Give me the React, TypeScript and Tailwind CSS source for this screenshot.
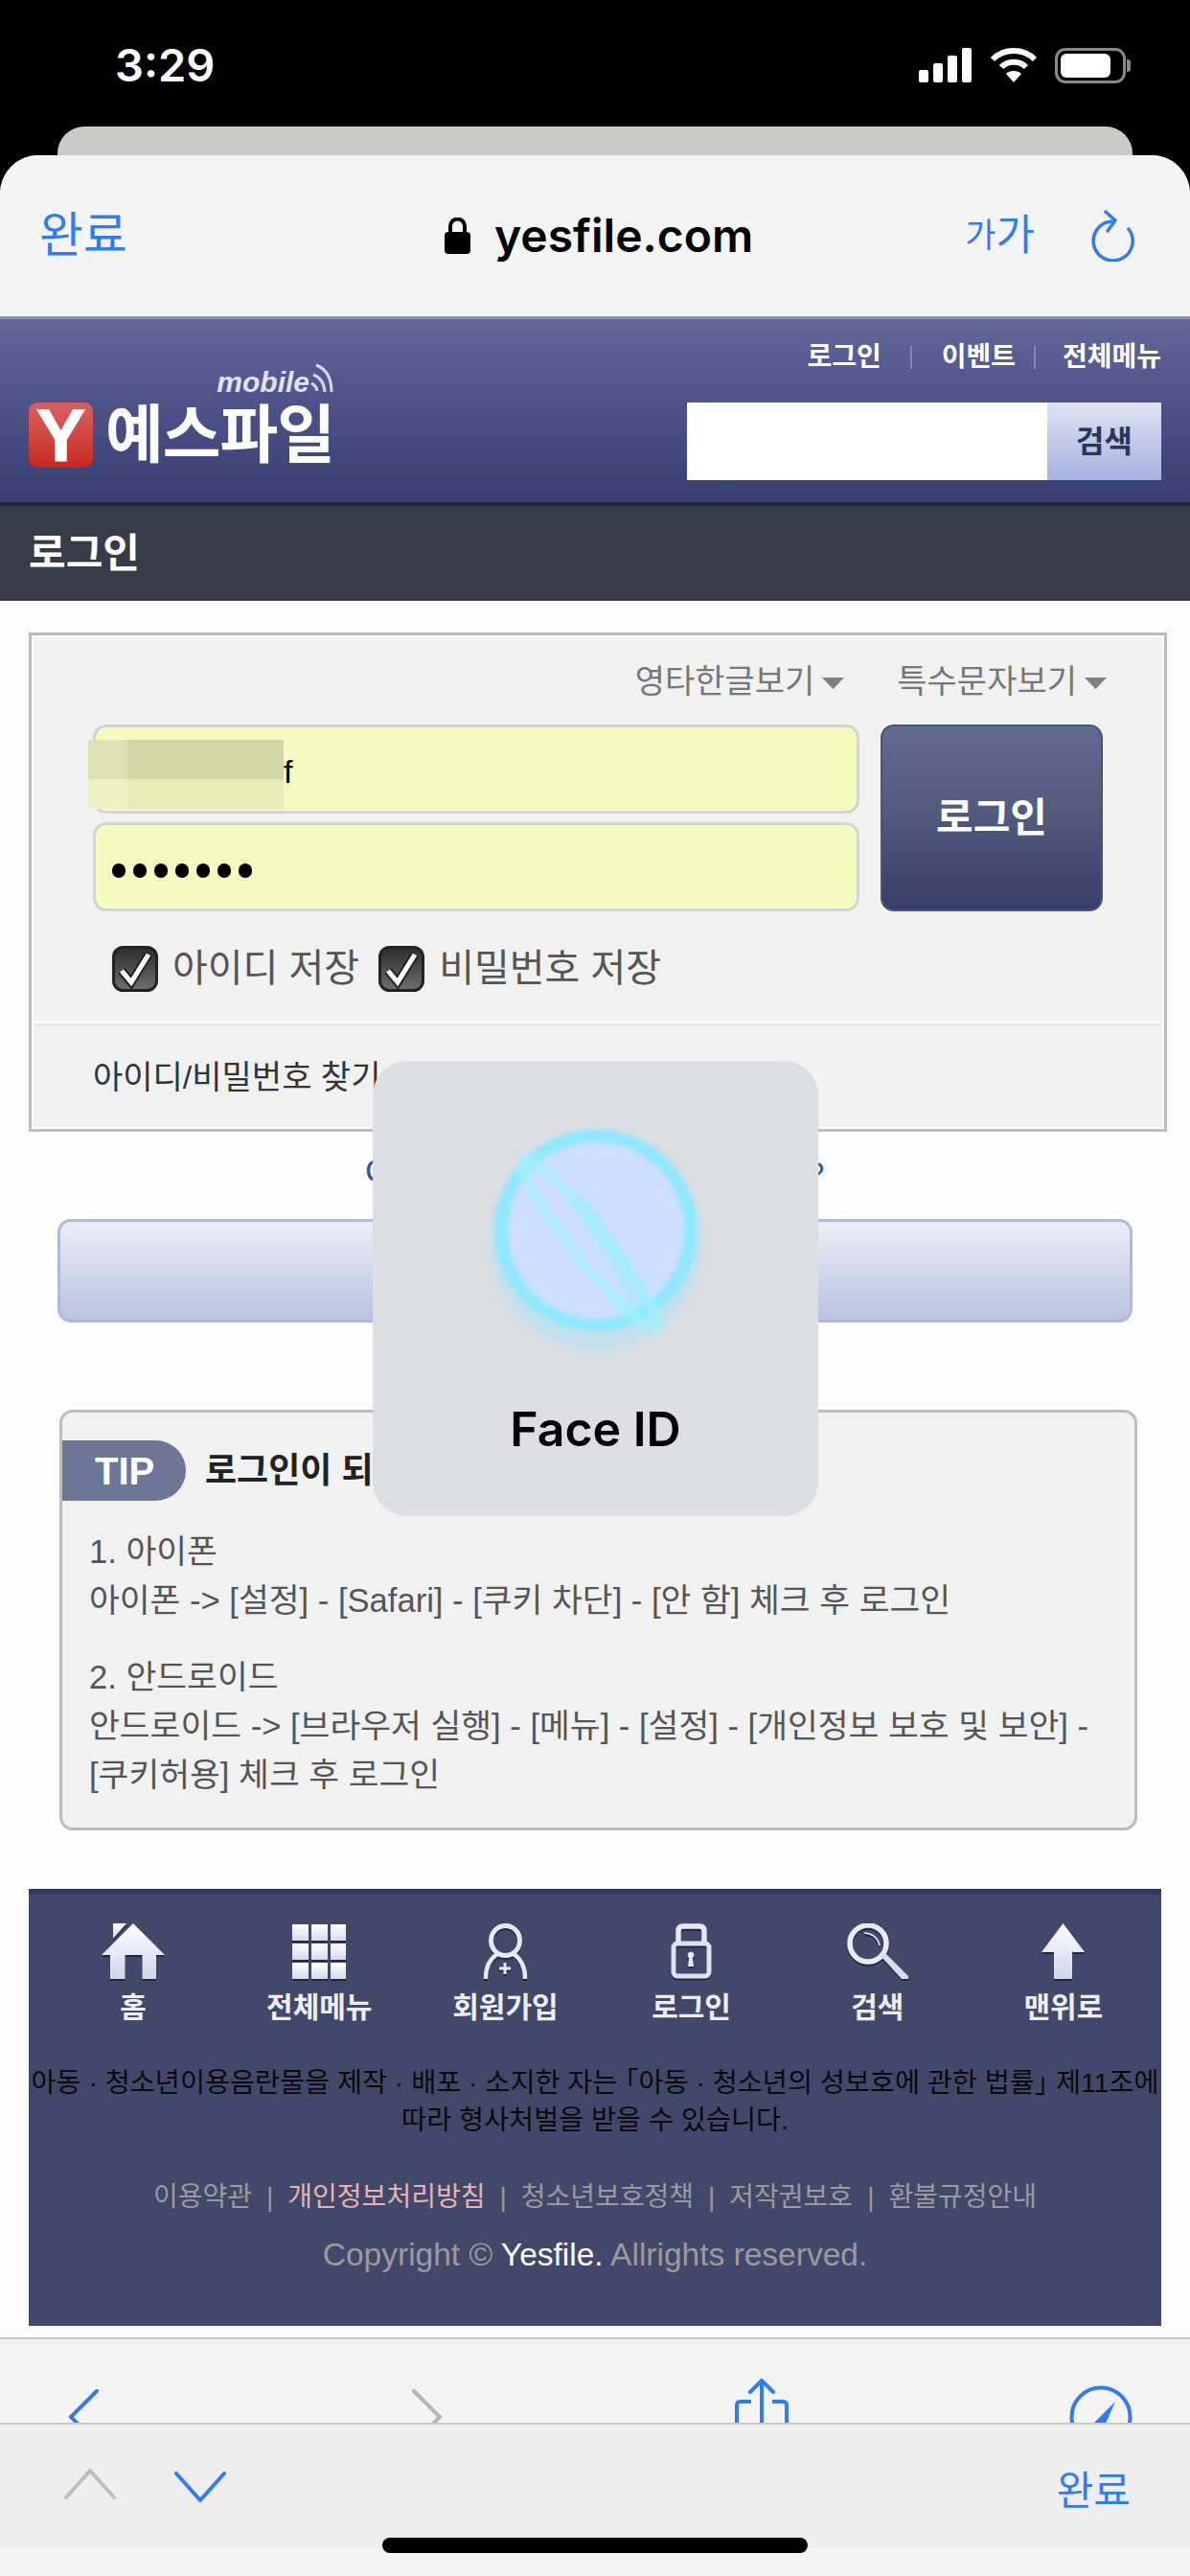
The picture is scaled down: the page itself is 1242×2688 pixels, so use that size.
const navItems = [
    { label: '홈', icon: <HomeIcon /> },
    { label: '전체메뉴', icon: <GridIcon /> },
    { label: '회원가입', icon: <UserIcon /> },
    { label: '로그인', icon: <LockIcon /> },
    { label: '검색', icon: <SearchIcon /> },
    { label: '맨위로', icon: <UpIcon /> },
];

function HomeIcon() {
    return (
        <svg width="66" height="58" viewBox="0 0 66 58" fill="url(#footGrad)">
            <path d="M33 0 L66 33 H57 V58 H42.5 V33 H24.5 V58 H9 V33 H0 Z" />
            <path d="M12 0 H26 L12 16 Z" />
        </svg>
    );
}

function GridIcon() {
    const cells = [0, 1, 2, 3, 4, 5, 6, 7, 8];
    return (
        <div className="grid grid-cols-3 gap-[3px] w-[56px] h-[57px]">
            {cells.map((c) => (
                <div key={c} className="bg-gradient-to-b from-white to-[#d5daec]" />
            ))}
        </div>
    );
}

function UserIcon() {
    return (
        <svg width="47" height="58" viewBox="0 0 47 58" fill="none" stroke="#e6e9f3">
            <ellipse cx="23.5" cy="18" rx="15" ry="15.5" strokeWidth="5" />
            <path d="M3 57 C3 44 9 36 15 32 M44 57 C44 44 38 36 32 32" strokeWidth="4.5" strokeLinecap="round" />
            <path d="M23 41 V53 M17 47 H29" strokeWidth="3" />
        </svg>
    );
}

function LockIcon() {
    return (
        <svg width="43" height="58" viewBox="0 0 43 58" fill="none" stroke="#e6e9f3">
            <path d="M8 22 V8 Q8 3 13 3 H30 Q35 3 35 8 V22" strokeWidth="5.5" />
            <rect x="3" y="21" width="37" height="34" rx="4" strokeWidth="5" stroke="#dfe3f0" />
            <circle cx="21" cy="33" r="3.2" fill="#e6e9f3" stroke="none" />
            <path d="M19.5 34 H22.5 L24 45 H18 Z" fill="#e6e9f3" stroke="none" />
        </svg>
    );
}

function SearchIcon() {
    return (
        <svg width="65" height="58" viewBox="0 0 65 58" fill="none">
            <circle cx="23" cy="21" r="19" stroke="#e8ebf4" strokeWidth="5.5" />
            <path d="M36 34 L41 31 L65 55 V58 H58 Z" fill="#d7dcec" />
            <path d="M19 10 C26 10 33 14 35 23" stroke="#e8ebf4" strokeWidth="1.6" />
        </svg>
    );
}

function UpIcon() {
    return (
        <svg width="45" height="58" viewBox="0 0 45 58" fill="url(#footGrad)">
            <path d="M22.5 0 L45 30 H32 V58 H13 V30 H0 Z" />
        </svg>
    );
}

function CheckBox() {
    return (
        <svg width="48" height="48" viewBox="0 0 48 48" className="shrink-0">
            <defs>
                <linearGradient id="checkGrad" x1="0" y1="0" x2="0" y2="1">
                    <stop offset="0" stopColor="#2c2c2c" />
                    <stop offset="1" stopColor="#6f6f6f" />
                </linearGradient>
            </defs>
            <rect x="1.5" y="1.5" width="45" height="45" rx="10" fill="url(#checkGrad)" stroke="#222" strokeWidth="3" />
            <path d="M10 26 L20 38 L38 9" fill="none" stroke="#222" strokeWidth="9" />
            <path d="M10 26 L20 38 L38 9" fill="none" stroke="#fff" strokeWidth="5" />
        </svg>
    );
}

function DownTriangle() {
    return (
        <svg width="23" height="12" viewBox="0 0 23 12" fill="#808080" className="ml-[8px] mt-[15px]">
            <path d="M0 0 H23 L11.5 12 Z" />
        </svg>
    );
}

function FaceIdGlyph() {
    return (
        <svg width="280" height="240" viewBox="0 0 280 240" className="overflow-visible">
            <defs>
                <filter id="glowWide" x="-30%" y="-30%" width="160%" height="160%">
                    <feGaussianBlur stdDeviation="8" />
                </filter>
                <filter id="glowSoft" x="-30%" y="-30%" width="160%" height="160%">
                    <feGaussianBlur stdDeviation="2.5" />
                </filter>
                <radialGradient id="faceFill">
                    <stop offset="0" stopColor="#d2dcff" />
                    <stop offset="1" stopColor="#cddfff" />
                </radialGradient>
            </defs>
            <circle cx="140" cy="150" r="100" fill="none" stroke="#9fe4ff" strokeWidth="14" filter="url(#glowWide)" opacity="0.65" />
            <circle cx="140" cy="134" r="96" fill="url(#faceFill)" />
            <circle cx="140" cy="134" r="99" fill="none" stroke="#8ce8ff" strokeWidth="13" filter="url(#glowSoft)" />
            <ellipse cx="133" cy="148" rx="110" ry="17" transform="rotate(52 133 148)" fill="none" stroke="#a8eeff" strokeWidth="11" filter="url(#glowSoft)" opacity="0.85" />
            <path d="M122 98 L196 226" stroke="#80f2ff" strokeWidth="7" filter="url(#glowWide)" />
        </svg>
    );
}

export default function App() {
    return (
        <div className="relative w-[1242px] h-[2688px] overflow-hidden bg-black flex flex-col [font-family:'Liberation_Sans','Noto_Sans_CJK_KR',sans-serif]">
            <svg width="0" height="0" className="absolute">
                <defs>
                    <linearGradient id="footGrad" x1="0" y1="0" x2="0" y2="1">
                        <stop offset="0" stopColor="#ffffff" />
                        <stop offset="1" stopColor="#cfd5ea" />
                    </linearGradient>
                </defs>
            </svg>

            {/* Status bar */}
            <div className="h-[132px] shrink-0 flex items-start pt-[42px] pl-[120px] pr-[62px] text-white">
                <span className="text-[47px] leading-[52px] font-semibold [font-family:Inter,sans-serif]">3:29</span>
                <div className="ml-auto flex items-center gap-[18px] h-[52px]">
                    <svg width="56" height="36" viewBox="0 0 56 36" fill="#fff">
                        <rect x="0" y="23" width="10" height="13" rx="2" />
                        <rect x="15" y="16" width="10" height="20" rx="2" />
                        <rect x="30" y="8" width="10" height="28" rx="2" />
                        <rect x="45" y="0" width="10" height="36" rx="2" />
                    </svg>
                    <svg width="50" height="36" viewBox="0 0 50 36" fill="none" stroke="#fff" strokeWidth="6">
                        <path d="M3 12 C15 0 35 0 47 12" />
                        <path d="M12 20 C19 13 31 13 38 20" />
                        <path d="M25 36 L17 27 C21 23 29 23 33 27 Z" fill="#fff" stroke="none" />
                    </svg>
                    <div className="flex items-center">
                        <div className="w-[74px] h-[37px] rounded-[11px] border-[3px] border-[#8a8a8a] p-[3px]">
                            <div className="w-[52px] h-full bg-white rounded-[6px]" />
                        </div>
                        <div className="w-[4px] h-[13px] bg-[#8a8a8a] rounded-r-[3px] ml-[1px]" />
                    </div>
                </div>
            </div>

            {/* Sheet behind */}
            <div className="h-[30px] shrink-0 mx-[60px] bg-[#c9cbc7] rounded-t-[28px]" />

            {/* Sheet */}
            <div className="flex-1 min-h-0 bg-[#fdfdfd] rounded-t-[40px] overflow-hidden flex flex-col">
                {/* Browser top bar */}
                <div className="h-[168px] shrink-0 bg-[#f4f4f4] flex items-center pl-[41px] pr-[58px]">
                    <span className="w-[423px] text-[50px] leading-[56px] text-[#2f7cf6]">완료</span>
                    <svg width="27" height="38" viewBox="0 0 27 38" className="shrink-0">
                        <path d="M6 16 V9 a7.5 7.5 0 0 1 15 0 V16" fill="none" stroke="#000" strokeWidth="4" />
                        <rect x="0" y="15" width="27" height="23" rx="4" fill="#000" />
                    </svg>
                    <span className="ml-[25px] text-[48px] leading-[60px] font-semibold text-black [font-family:Inter,sans-serif]">yesfile.com</span>
                    <div className="ml-auto flex items-end text-[#2f7cf6] leading-[50px] mr-[58px]">
                        <span className="text-[35px]">가</span>
                        <span className="text-[44px]">가</span>
                    </div>
                    <svg width="46" height="54" viewBox="0 0 46 54" fill="none" stroke="#2f7cf6" strokeWidth="3.5" strokeLinecap="round" strokeLinejoin="round">
                        <path d="M22 12 A20.5 20.5 0 1 0 40 20" />
                        <path d="M16 2 L26 11 L18 22" />
                    </svg>
                </div>

                {/* Site header */}
                <div className="h-[194px] shrink-0 border-t-[3px] border-[#8a90a6] bg-gradient-to-b from-[#61669b] to-[#373e72] flex justify-between px-[30px]">
                    <div className="pt-[38px]">
                        <div className="flex items-end justify-end h-[46px] w-[318px]">
                            <span className="text-[30px] leading-[36px] italic font-bold text-[#dfe2f2] [font-family:'Liberation_Sans',sans-serif]">mobile</span>
                            <svg width="24" height="32" viewBox="0 0 24 32" fill="none" stroke="#d5d8ea" strokeWidth="3" className="mb-[6px] ml-[1px]">
                                <path d="M1 21 Q6 23 7 29" />
                                <path d="M3 12 Q14 16 15 30" />
                                <path d="M6 2 Q22 8 22 30" />
                            </svg>
                        </div>
                        <div className="flex items-center mt-[3px]">
                            <div className="w-[67px] h-[68px] rounded-[9px] bg-gradient-to-b from-[#d9605f] to-[#c9261f] flex items-center justify-center">
                                <span className="text-[78px] leading-[68px] font-bold text-white [-webkit-text-stroke:1px_white]">Y</span>
                            </div>
                            <span className="ml-[13px] text-[66px] leading-[68px] font-bold text-white tracking-[-1px]">예스파일</span>
                        </div>
                    </div>
                    <div className="pt-[23px] flex flex-col items-end">
                        <div className="flex items-center text-[28px] leading-[34px] font-bold text-white">
                            <span>로그인</span>
                            <span className="w-[2px] h-[24px] bg-[#8288ad] ml-[30px] mr-[31px]" />
                            <span>이벤트</span>
                            <span className="w-[2px] h-[24px] bg-[#8288ad] ml-[19px] mr-[28px]" />
                            <span>전체메뉴</span>
                        </div>
                        <div className="flex mt-[30px] h-[81px]">
                            <div className="w-[376px] bg-white" />
                            <div className="w-[119px] bg-gradient-to-b from-[#dfe3f4] to-[#a6b2e0] flex items-center justify-center">
                                <span className="text-[32px] font-bold text-[#2c3560]">검색</span>
                            </div>
                        </div>
                    </div>
                </div>

                {/* Page title */}
                <div className="h-[103px] shrink-0 border-t-[4px] border-[#1f2440] bg-[#363b47] flex items-center px-[30px]">
                    <span className="text-[42px] leading-[48px] font-semibold text-white">로그인</span>
                </div>

                {/* Page */}
                <div className="flex-1 min-h-0">
                    {/* Login panel */}
                    <div className="mt-[33px] mx-[30px] w-[1188px] h-[521px] border-[3px] border-[#bcbcbc] bg-[#f1f1f1] shadow-[inset_0_0_0_2px_#fff]">
                        <div className="h-[93px] pt-[29px] pr-[60px] flex justify-end items-start text-[34px] leading-[38px] text-[#777]">
                            <span>영타한글보기</span>
                            <DownTriangle />
                            <span className="ml-[55px]">특수문자보기</span>
                            <DownTriangle />
                        </div>
                        <div className="flex ml-[64px]">
                            <div className="w-[800px] flex flex-col gap-[9px]">
                                <div className="relative h-[93px] rounded-[14px] border-[3px] border-[#d3d3d3] bg-[#f7fabf] flex items-center pl-[196px] pt-[4px]">
                                    <span className="text-[34px] leading-[40px] text-black">f</span>
                                    <div className="absolute left-[-8px] top-[13px] w-[204px] h-[72px] flex flex-col">
                                        <div className="h-[41px] flex">
                                            <div className="w-[41px] bg-[#dfe0b3]" />
                                            <div className="flex-1 bg-[#d2d5a4]" />
                                        </div>
                                        <div className="h-[31px] flex">
                                            <div className="w-[41px] bg-[#eff1c3]" />
                                            <div className="flex-1 bg-[#e7ebb6]" />
                                        </div>
                                    </div>
                                </div>
                                <div className="h-[93px] rounded-[14px] border-[3px] border-[#d3d3d3] bg-[#f7fabf] flex items-center gap-[8px] pl-[17px] pt-[8px]">
                                    {[0, 1, 2, 3, 4, 5, 6].map((d) => (
                                        <div key={d} className="w-[14px] h-[15px] rounded-full bg-black" />
                                    ))}
                                </div>
                            </div>
                            <div className="ml-[22px] w-[232px] h-[195px] rounded-[14px] border-[2px] border-[#4a5478] bg-gradient-to-b from-[#606b90] via-[#4f5a7c] to-[#363d66] flex items-center justify-center">
                                <span className="text-[42px] leading-[48px] font-bold text-white">로그인</span>
                            </div>
                        </div>
                        <div className="flex items-center ml-[84px] mt-[36px] h-[47px] text-[40px] leading-[47px] text-[#555]">
                            <CheckBox />
                            <span className="ml-[15px]">아이디 저장</span>
                            <span className="ml-[20px]"><CheckBox /></span>
                            <span className="ml-[15px]">비밀번호 저장</span>
                        </div>
                        <div className="mt-[31px] mx-[3px] h-[5px] bg-white border-b-[2px] border-[#e4e4e4]" />
                        <div className="pl-[64px] pt-[34px] text-[34px] leading-[40px] text-[#333]">아이디/비밀번호 찾기</div>
                    </div>

                    <p className="mt-[24px] text-center text-[33px] leading-[40px] font-medium text-[#3b4f99] whitespace-nowrap tracking-[0.5px]">아직 예스파일 회원이 아니신가요?</p>

                    <div className="mt-[27px] mx-[60px] h-[108px] rounded-[14px] border-[3px] border-[#adb9de] bg-gradient-to-b from-[#eceef7] to-[#b9c3e0] flex items-center justify-center">
                        <span className="text-[36px] font-bold text-[#2c3560]">회원가입</span>
                    </div>

                    {/* Tip */}
                    <div className="mt-[91px] ml-[62px] w-[1125px] h-[439px] rounded-[14px] border-[3px] border-[#bcbcbc] bg-[#f1f1f1] pt-[29px]">
                        <div className="flex items-center">
                            <div className="w-[129px] h-[63px] rounded-r-full bg-[#6c7798] flex items-center pl-[34px]">
                                <span className="text-[40px] leading-[48px] font-bold text-white">TIP</span>
                            </div>
                            <span className="ml-[20px] text-[36px] leading-[40px] font-bold text-[#222]">로그인이 되지 않을 때는?</span>
                        </div>
                        <div className="mt-[28px] pl-[28px] text-[34.6px] leading-[51px] text-[#555] whitespace-nowrap">
                            <p>1. 아이폰</p>
                            <p>아이폰 -&gt; [설정] - [Safari] - [쿠키 차단] - [안 함] 체크 후 로그인</p>
                            <p className="mt-[29px]">2. 안드로이드</p>
                            <p>안드로이드 -&gt; [브라우저 실행] - [메뉴] - [설정] - [개인정보 보호 및 보안] -</p>
                            <p>[쿠키허용] 체크 후 로그인</p>
                        </div>
                    </div>

                    {/* Footer */}
                    <div className="mt-[61px] mx-[30px] h-[456px] border-t-[6px] border-[#2f3762] bg-[#414869] pt-[30px]">
                        <div className="grid grid-cols-6 pl-[12px] pr-[5px]">
                            {navItems.map((item) => (
                                <div key={item.label} className="flex flex-col items-center">
                                    <div className="h-[58px] flex items-end drop-shadow-[0_2px_0_#23283f]">{item.icon}</div>
                                    <span className="mt-[14px] text-[30px] leading-[32px] font-bold text-[#eceef4]">{item.label}</span>
                                </div>
                            ))}
                        </div>
                        <p className="mt-[43px] text-center text-[28.3px] leading-[39px] text-[#0a0a0a] whitespace-nowrap">
                            아동 · 청소년이용음란물을 제작 · 배포 · 소지한 자는 <span className="-ml-[14px]">「</span>아동 · 청소년의 성보호에 관한 법률<span className="-mr-[14px]">」</span> 제11조에
                            <br />
                            따라 형사처벌을 받을 수 있습니다.
                        </p>
                        <div className="mt-[45px] flex justify-center text-[28px] leading-[32px] text-[#9b9b9f]">
                            <span>이용약관</span>
                            <span className="mx-[15px]">|</span>
                            <span className="text-[#e8b2b4]">개인정보처리방침</span>
                            <span className="mx-[15px]">|</span>
                            <span>청소년보호정책</span>
                            <span className="mx-[15px]">|</span>
                            <span>저작권보호</span>
                            <span className="mx-[15px]">|</span>
                            <span>환불규정안내</span>
                        </div>
                        <p className="mt-[24px] text-center text-[33.5px] leading-[40px] text-[#9b9b9f]">
                            Copyright © <span className="text-white">Yesfile.</span> Allrights reserved.
                        </p>
                    </div>
                </div>

                {/* Browser bottom bar, cut by the accessory bar */}
                <div className="h-[89px] shrink-0 bg-[#f4f4f4] border-t-[2px] border-[#c8c8c8] overflow-hidden flex items-start">
                    <svg width="32" height="50" viewBox="0 0 32 50" fill="none" stroke="#2f7cf6" strokeWidth="4" strokeLinecap="round" className="ml-[71px] mt-[52px]">
                        <path d="M30 2 L3 29 L30 56" />
                    </svg>
                    <svg width="32" height="50" viewBox="0 0 32 50" fill="none" stroke="#b5b5b5" strokeWidth="4" strokeLinecap="round" className="ml-[327px] mt-[52px]">
                        <path d="M2 2 L29 29 L2 56" />
                    </svg>
                    <svg width="58" height="60" viewBox="0 0 58 60" fill="none" stroke="#2f7cf6" strokeWidth="4" className="ml-[304px] mt-[41px]">
                        <path d="M29 3 V60 M17 14 L29 2 L41 14" strokeLinecap="round" />
                        <path d="M18 24 H7 Q3 24 3 28 V60 M40 24 H51 Q55 24 55 28 V60" />
                    </svg>
                    <svg width="66" height="66" viewBox="0 0 66 66" fill="none" className="ml-[292px] mt-[48px]">
                        <circle cx="33" cy="33" r="30.5" stroke="#2f7cf6" strokeWidth="4" />
                        <path d="M48 17 L38 40 L25 40 Z" fill="#2f7cf6" />
                        <path d="M25 40 L18 50" stroke="#2f7cf6" strokeWidth="3" />
                    </svg>
                </div>

                {/* Keyboard accessory bar */}
                <div className="h-[131px] shrink-0 bg-[#eeeeee] border-t-[2px] border-[#c8c8c8] flex items-start pl-[67px] pr-[62px] pt-[46px]">
                    <svg width="54" height="32" viewBox="0 0 54 32" fill="none" stroke="#bdbdbd" strokeWidth="4" strokeLinecap="round" strokeLinejoin="round">
                        <path d="M2 30 L27 2 L52 30" />
                    </svg>
                    <svg width="54" height="32" viewBox="0 0 54 32" fill="none" stroke="#2f7cf6" strokeWidth="4" strokeLinecap="round" strokeLinejoin="round" className="ml-[61px] mt-[3px]">
                        <path d="M2 2 L27 30 L52 2" />
                    </svg>
                    <span className="ml-auto text-[42px] leading-[48px] text-[#2f7cf6]">완료</span>
                </div>
                <div className="h-[29px] shrink-0 bg-[#f4f4f4]" />
            </div>

            {/* Home indicator */}
            <div className="absolute left-[399px] top-[2648px] w-[444px] h-[16px] rounded-full bg-black" />

            {/* Face ID overlay */}
            <div className="absolute left-[389px] top-[1107px] w-[465px] h-[475px] rounded-[36px] bg-[#dcdee1] flex flex-col items-center pt-[43px]">
                <FaceIdGlyph />
                <span className="mt-[71px] text-[50px] leading-[60px] font-semibold text-black [font-family:Inter,sans-serif]">Face ID</span>
            </div>
        </div>
    );
}
